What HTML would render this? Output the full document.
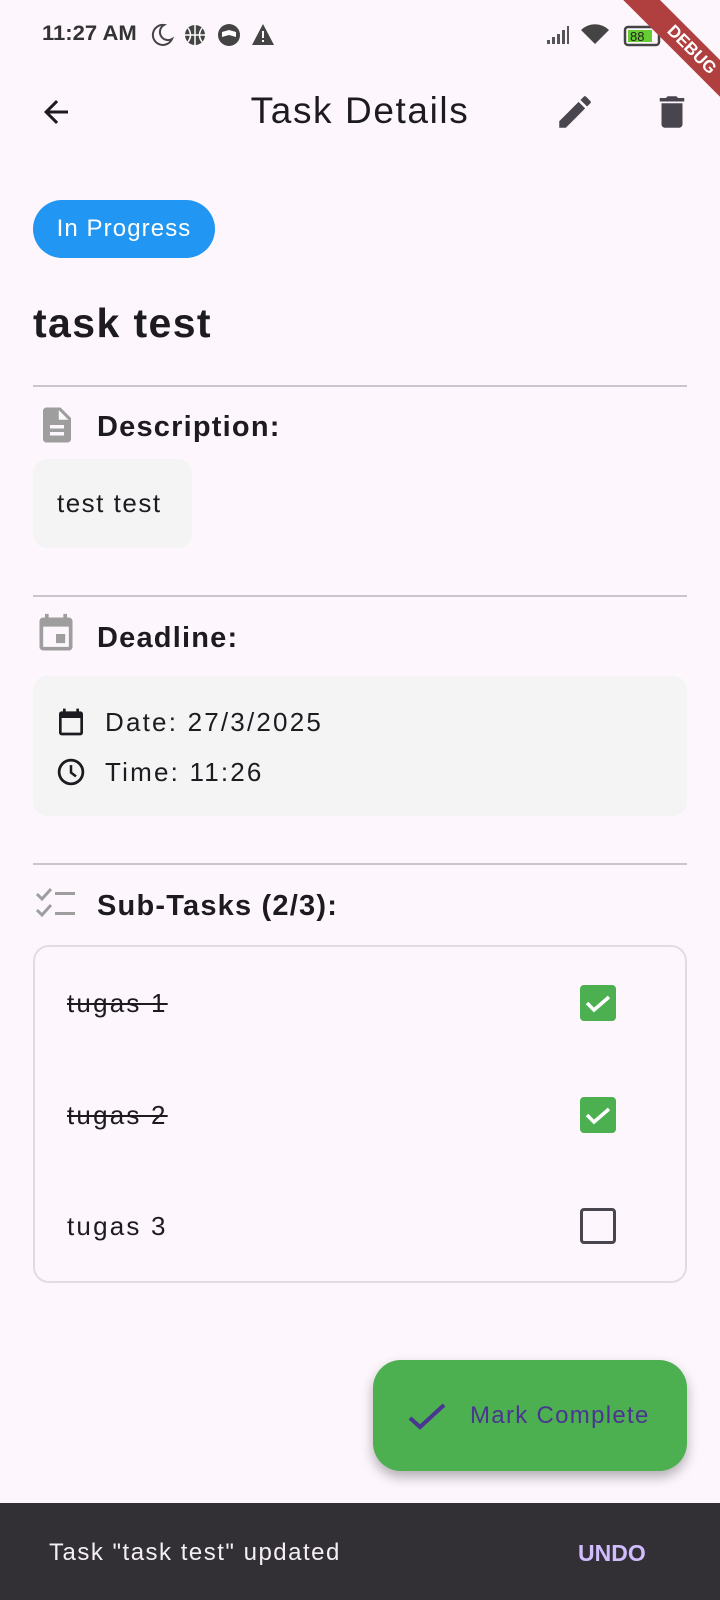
<!DOCTYPE html>
<html><head><meta charset="utf-8"><style>
*{margin:0;padding:0;box-sizing:border-box}
body{width:720px;height:1600px;background:#fdf7fd;font-family:"Liberation Sans",sans-serif;color:#1d1b20;position:relative;overflow:hidden}
.a{position:absolute}
.div{position:absolute;left:33px;width:654px;height:2px;background:#cac4cf}
.h{position:absolute;left:97px;font-size:29px;font-weight:bold;line-height:36px;letter-spacing:1.2px}
.row{position:absolute;left:67px;font-size:26px;line-height:32px;letter-spacing:2.2px}
.cb{position:absolute;left:580px;width:36px;height:36px;border-radius:4px}
</style></head><body>
<!-- status bar -->
<div class="a" style="left:42px;top:22px;font-size:21px;font-weight:bold;color:#333;transform:scaleX(1.05);transform-origin:0 0">11:27 AM</div>
<svg class="a" style="left:150px;top:22px" width="130" height="26" viewBox="0 0 130 26">
<path d="M14 3a10 10 0 1 0 8 14a8 8 0 0 1-8-14z" fill="none" stroke="#444" stroke-width="2"/>
<circle cx="45" cy="13" r="10" fill="#444"/><path d="M35 13h20M45 3v20M38 6q5 7 0 14M52 6q-5 7 0 14" stroke="#fff" stroke-width="1.5" fill="none"/>
<circle cx="79" cy="13" r="11" fill="#444"/><path d="M72 10l7-2 7 2v5l-7-2-7 2z" fill="#fff"/>
<path d="M113 2l11 21h-22z" fill="#444"/><rect x="112" y="9" width="2" height="7" fill="#fff"/><rect x="112" y="18" width="2" height="2" fill="#fff"/>
</svg>
<svg class="a" style="left:545px;top:22px" width="170" height="26" viewBox="0 0 170 26">
<path d="M2 22h3v-4H2zM7 22h3v-7H7zM12 22h3v-10h-3zM17 22h3v-14h-3zM22 22h2v-18h-2z" fill="#555"/>
<path d="M50 22l-14-14a20 20 0 0 1 28 0z" fill="#444"/>
<rect x="80" y="5" width="34" height="18" rx="3" fill="none" stroke="#444" stroke-width="2.5"/><rect x="83" y="8" width="24" height="12" fill="#6c3"/>
<text x="85" y="19" font-size="13" font-family="Liberation Sans" fill="#222">88</text>
<path d="M130 3l-6 11h5l-3 10 7-13h-5z" fill="#444"/>
</svg>
<div class="a" style="width:200px;height:26px;background:#b04040;transform:rotate(45deg);transform-origin:0 0;color:#fff;font-size:17px;font-weight:bold;text-align:center;line-height:26px;left:630px;top:-30px">DEBUG</div>
<!-- app bar -->
<svg class="a" style="left:38px;top:94px" width="36" height="36" viewBox="0 0 24 24"><path d="M20 11H7.83l5.59-5.59L12 4l-8 8 8 8 1.41-1.41L7.83 13H20v-2z" fill="#1d1b20"/></svg>
<div class="a" style="left:0;width:720px;top:90px;text-align:center;font-size:37px;line-height:42px;letter-spacing:1.6px">Task Details</div>
<svg class="a" style="left:554px;top:91px" width="42" height="42" viewBox="0 0 24 24"><path d="M3 17.25V21h3.75L17.81 9.94l-3.75-3.75L3 17.25zM20.71 7.04a1 1 0 0 0 0-1.41l-2.34-2.34a1 1 0 0 0-1.41 0l-1.83 1.83 3.75 3.75 1.83-1.83z" fill="#49454f"/></svg>
<svg class="a" style="left:651px;top:91px" width="42" height="42" viewBox="0 0 24 24"><path d="M6 19c0 1.1.9 2 2 2h8c1.1 0 2-.9 2-2V7H6v12zM19 4h-3.5l-1-1h-5l-1 1H5v2h14V4z" fill="#49454f"/></svg>
<!-- chip -->
<div class="a" style="left:33px;top:200px;width:182px;height:58px;border-radius:29px;background:#2196f3;color:#fff;font-size:24px;line-height:58px;text-align:center;letter-spacing:1.1px">In Progress</div>
<div class="a" style="left:33px;top:300px;font-size:41px;font-weight:bold;line-height:46px;letter-spacing:1.4px">task test</div>
<div class="div" style="top:385px"></div>
<svg class="a" style="left:36px;top:404px" width="42" height="42" viewBox="0 0 24 24"><path d="M14 2H6c-1.1 0-2 .9-2 2v16c0 1.1.9 2 2 2h12c1.1 0 2-.9 2-2V8l-6-6zm2 16H8v-2h8v2zm0-4H8v-2h8v2zm-3-5V3.5L18.5 9H13z" fill="#9e9e9e"/></svg>
<div class="h" style="top:409px">Description:</div>
<div class="a" style="left:33px;top:459px;width:159px;height:89px;border-radius:14px;background:#f4f4f4;font-size:26px;line-height:89px;padding-left:24px;letter-spacing:1.5px">test test</div>
<div class="div" style="top:595px"></div>
<svg class="a" style="left:34px;top:612px" width="44" height="44" viewBox="0 0 24 24"><path d="M17 12h-5v5h5v-5zM16 1v2H8V1H6v2H5c-1.11 0-2 .9-2 2v14a2 2 0 0 0 2 2h14c1.1 0 2-.9 2-2V5c0-1.1-.9-2-2-2h-1V1h-2zm3 18H5V8h14v11z" fill="#9e9e9e"/></svg>
<div class="h" style="top:620px">Deadline:</div>
<div class="a" style="left:33px;top:676px;width:654px;height:140px;border-radius:14px;background:#f4f4f4"></div>
<svg class="a" style="left:55px;top:706px" width="32" height="32" viewBox="0 0 24 24"><path d="M19 4h-1V2h-2v2H8V2H6v2H5c-1.1 0-2 .9-2 2v14c0 1.1.9 2 2 2h14c1.1 0 2-.9 2-2V6c0-1.1-.9-2-2-2zm0 16H5V9h14v11z" fill="#1d1b20"/></svg>
<div class="row" style="left:105px;top:706px">Date: 27/3/2025</div>
<svg class="a" style="left:56px;top:757px" width="30" height="30" viewBox="0 0 24 24"><circle cx="12" cy="12" r="9.5" fill="none" stroke="#1d1b20" stroke-width="2.2"/><path d="M12 6.5v6l4 3" fill="none" stroke="#1d1b20" stroke-width="2"/></svg>
<div class="row" style="left:105px;top:756px">Time: 11:26</div>
<div class="div" style="top:863px"></div>
<svg class="a" style="left:35px;top:886px" width="42" height="36" viewBox="0 0 42 36"><path d="M2 8l5 5 9-10M2 24l5 5 9-10" fill="none" stroke="#9e9e9e" stroke-width="3"/><rect x="20" y="6" width="20" height="3" fill="#9e9e9e"/><rect x="20" y="26" width="20" height="3" fill="#9e9e9e"/></svg>
<div class="h" style="top:888px">Sub-Tasks (2/3):</div>
<div class="a" style="left:33px;top:945px;width:654px;height:338px;border:2px solid #e0dde2;border-radius:16px"></div>
<div class="row" style="top:987px;text-decoration:line-through">tugas 1</div>
<div class="cb" style="top:985px;background:#4caf50"><svg width="36" height="36" viewBox="0 0 36 36"><path d="M7 18l7 7 15-13" fill="none" stroke="#fff" stroke-width="3.5"/></svg></div>
<div class="row" style="top:1099px;text-decoration:line-through">tugas 2</div>
<div class="cb" style="top:1097px;background:#4caf50"><svg width="36" height="36" viewBox="0 0 36 36"><path d="M7 18l7 7 15-13" fill="none" stroke="#fff" stroke-width="3.5"/></svg></div>
<div class="row" style="top:1210px">tugas 3</div>
<div class="cb" style="top:1208px;border:3px solid #49454f"></div>
<!-- FAB -->
<div class="a" style="left:373px;top:1360px;width:314px;height:111px;border-radius:28px;background:#4caf50;box-shadow:0 6px 12px rgba(0,0,0,.3)"></div>
<svg class="a" style="left:407px;top:1398px" width="40" height="36" viewBox="0 0 40 36"><path d="M3 20l10 9 24-22" fill="none" stroke="#4a3591" stroke-width="4"/></svg>
<div class="a" style="left:470px;top:1401px;font-size:24px;color:#4a3591;line-height:30px;letter-spacing:1.3px">Mark Complete</div>
<!-- snackbar -->
<div class="a" style="left:0;top:1503px;width:720px;height:97px;background:#322f35"></div>
<div class="a" style="left:49px;top:1538px;font-size:24px;color:#f4eff4;line-height:30px;letter-spacing:1.5px">Task "task test" updated</div>
<div class="a" style="left:578px;top:1538px;font-size:23px;color:#d0bcff;font-weight:bold;line-height:30px">UNDO</div>
</body></html>
